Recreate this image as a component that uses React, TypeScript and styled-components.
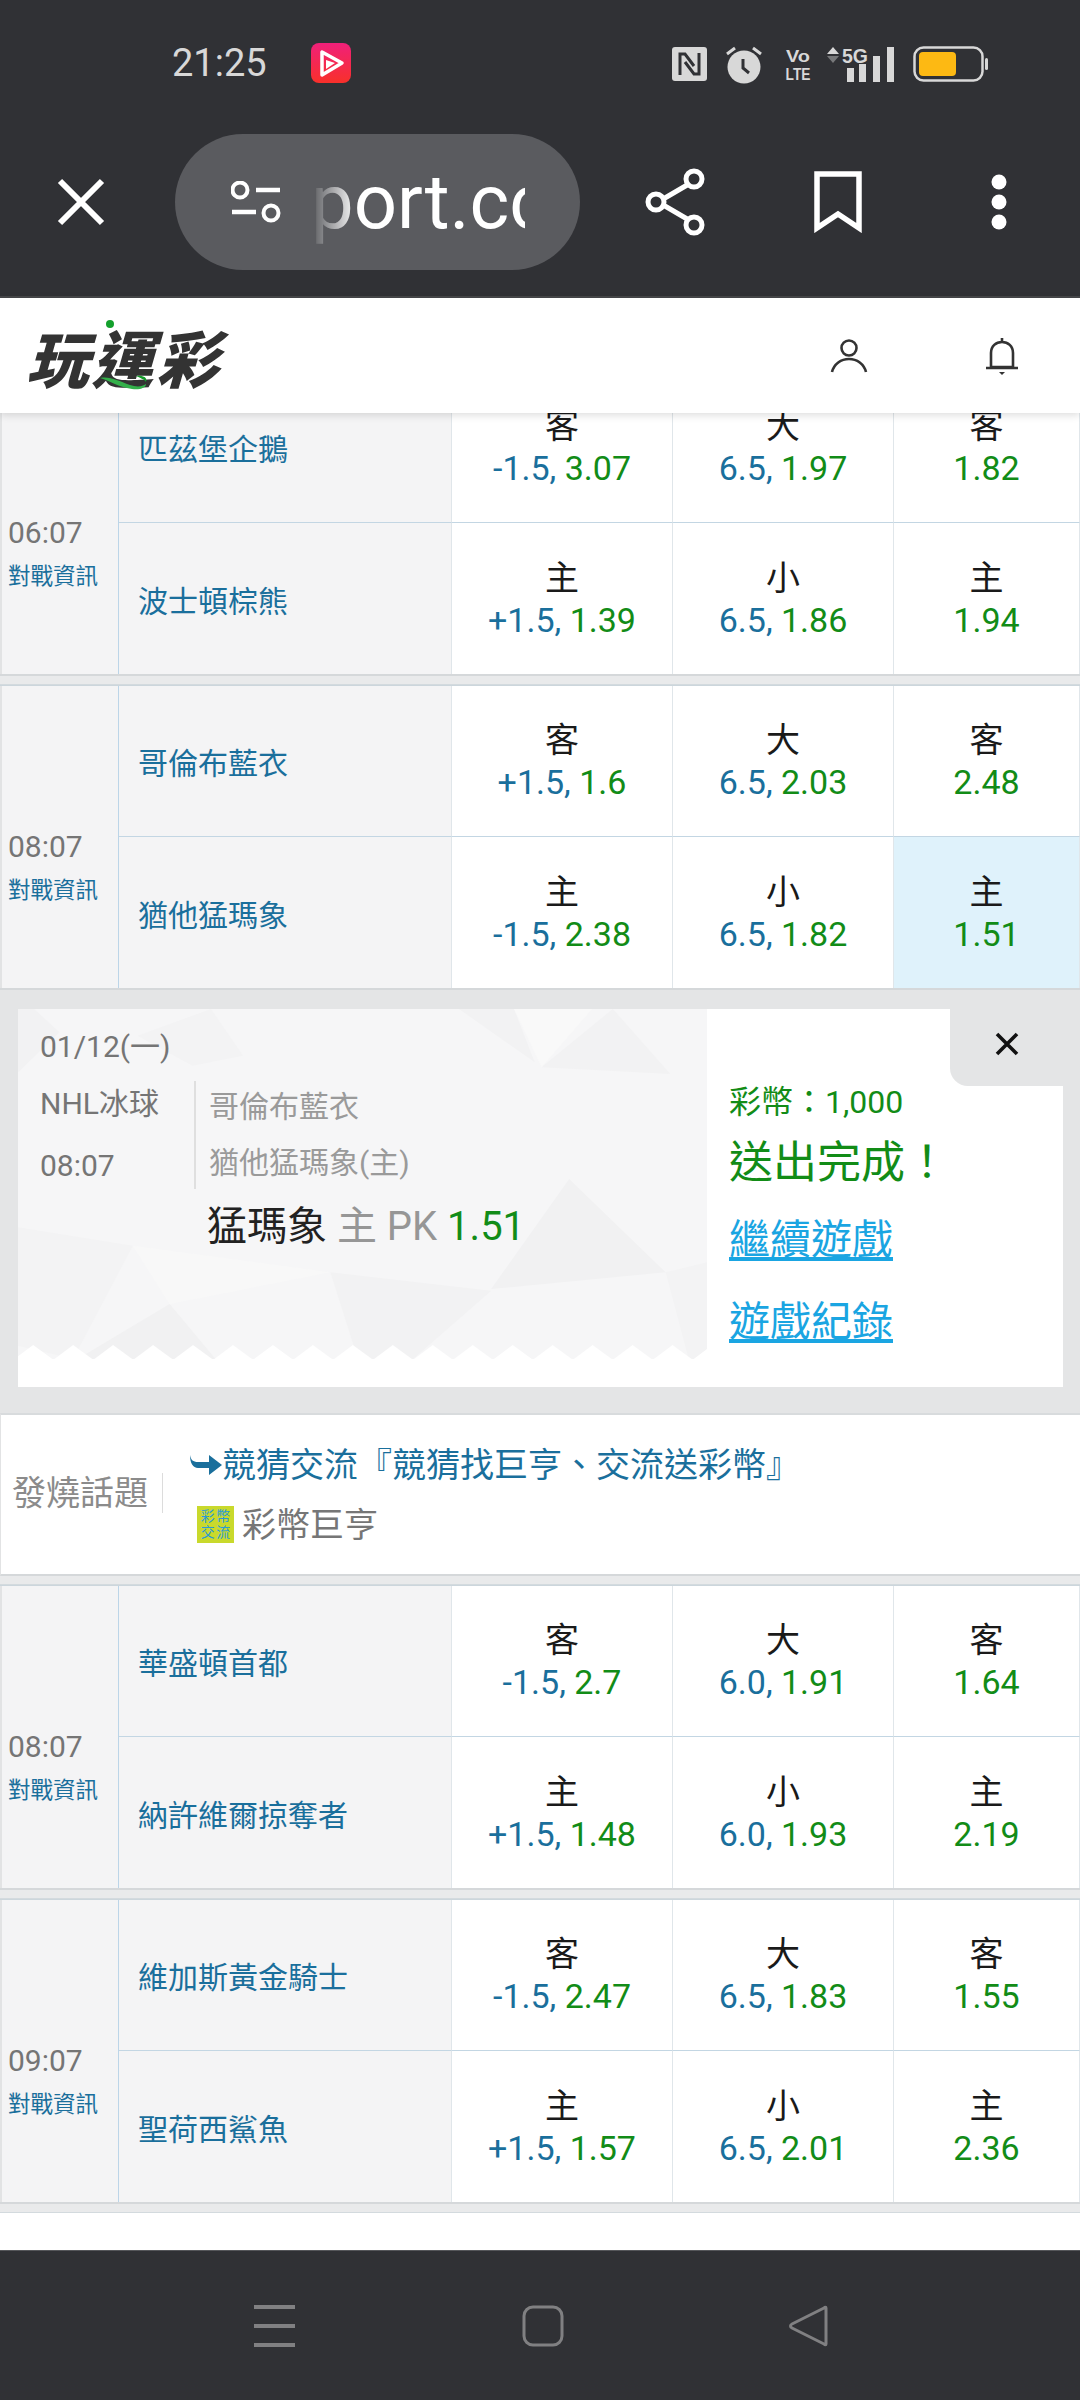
import * as React from 'react'
import styled, { createGlobalStyle } from 'styled-components'

const dark = '#303135'
const blue = '#1a6f9c'
const green = '#128c17'
const cjk = '"Roboto", "Noto Sans CJK TC", sans-serif'

const GlobalStyle = createGlobalStyle`
  html, body {
    margin: 0;
    padding: 0;
    background: #ffffff;
  }
  * {
    box-sizing: border-box;
  }
`

const Page = styled.div`
  width: 1080px;
  height: 2400px;
  display: flex;
  flex-direction: column;
  overflow: hidden;
  font-family: ${cjk};
`

const TopBar = styled.div`
  height: 298px;
  flex: none;
  background: ${dark};
  border-bottom: 2px solid #46474a;
`

const StatusBar = styled.div`
  height: 134px;
  display: flex;
  align-items: center;
  padding: 8px 91px 0 172px;
`

const Clock = styled.span`
  font-size: 38px;
  color: #d8d8d8;
  width: 98px;
  margin-top: -16px;
`

const AppIcon = styled.svg`
  margin: -16px 0 0 41px;
`

const StatusIcons = styled.div`
  margin-left: auto;
  display: flex;
  align-items: center;
  margin-top: -14px;
`

const StatusIcon = styled.svg<{ $gap: number }>`
  display: block;
  margin-left: ${(p) => p.$gap}px;
`

const Toolbar = styled.div`
  height: 136px;
  display: flex;
  align-items: center;
`

const ToolIcon = styled.svg<{ $gap: number }>`
  flex: none;
  margin-left: ${(p) => p.$gap}px;
`

const UrlPill = styled.div`
  flex: none;
  margin-left: 70px;
  width: 405px;
  height: 136px;
  border-radius: 68px;
  background: #5a5b5f;
  display: flex;
  align-items: center;
  padding-left: 56px;
`

const UrlText = styled.div`
  width: 214px;
  margin-left: 30px;
  height: 96px;
  overflow: hidden;
  font-size: 76px;
  line-height: 96px;
  color: #ffffff;
  text-align: right;
  white-space: nowrap;
  -webkit-mask-image: linear-gradient(90deg, transparent 0, #000 46px);
  mask-image: linear-gradient(90deg, transparent 0, #000 46px);
`

const SiteHeader = styled.header`
  height: 115px;
  flex: none;
  background: #ffffff;
  position: relative;
  z-index: 2;
  display: flex;
  align-items: center;
  padding: 0 61px 0 28px;
  box-shadow: 0 2px 8px rgba(0, 0, 0, 0.14);
`

const Logo = styled.div`
  position: relative;
  width: 196px;
  height: 80px;
`

const LogoText = styled.div`
  font-family: "Noto Sans CJK TC", sans-serif;
  font-weight: 900;
  font-size: 62px;
  line-height: 80px;
  letter-spacing: 3px;
  color: #333333;
  white-space: nowrap;
  transform: skewX(-16deg);
  transform-origin: 50% 50%;
  margin-left: 6px;
`

const LogoMark = styled.svg`
  position: absolute;
  left: 0;
  top: 0;
`

const HeaderIcons = styled.div`
  margin-left: auto;
  display: flex;
  align-items: center;
  gap: 117px;
`

const Content = styled.main`
  flex: 1;
  min-height: 0;
  overflow: hidden;
  background: #ffffff;
`

const Scroller = styled.div`
  margin-top: -42px;
`

const MatchGroup = styled.section`
  display: grid;
  grid-template-columns: 119px 333px 221px 221px 186px;
  grid-template-rows: 151px 151px;
  border-top: 1px solid #ccd6dc;
  border-bottom: 2px solid #d5d8da;
`

const Gap = styled.div`
  height: 9px;
  background: #e9eaeb;
  border-bottom: 1px solid #d3dade;
`

const TimeCell = styled.div`
  grid-row: 1 / span 2;
  background: #f4f4f5;
  border-left: 2px solid #e2e3e4;
  border-right: 1px solid #bcd5e8;
  padding: 58px 0 0 6px;
  display: flex;
  flex-direction: column;
  justify-content: center;
`

const Time = styled.div`
  font-size: 30px;
  line-height: 40px;
  color: #757575;
`

const InfoLink = styled.div`
  font-size: 22.5px;
  line-height: 30px;
  margin-top: 8px;
  color: ${blue};
  white-space: nowrap;
`

const TeamCell = styled.div<{ $last?: boolean }>`
  background: #f4f4f5;
  display: flex;
  align-items: center;
  padding-left: 19px;
  font-size: 30px;
  color: ${blue};
  border-right: 1px solid #e0e6ea;
  border-bottom: ${(p) => (p.$last ? 'none' : '1px solid #c3d6e3')};
`

const OddsCell = styled.div<{ $last?: boolean; $picked?: boolean }>`
  background: ${(p) => (p.$picked ? '#dff2fb' : '#ffffff')};
  display: flex;
  flex-direction: column;
  align-items: center;
  justify-content: center;
  border-right: 1px solid #e0e6ea;
  border-bottom: ${(p) => (p.$last ? 'none' : '1px solid #c3d6e3')};
`

const Side = styled.div`
  font-size: 34px;
  line-height: 42px;
  color: #1a1a1a;
`

const Odds = styled.div`
  font-size: 34px;
  line-height: 42px;
  color: ${green};
  white-space: nowrap;
`

const Line = styled.span`
  color: ${blue};
`

const Panel = styled.div`
  height: 423px;
  background: #e4e5e6;
  padding: 19px 17px 26px 18px;
`

const Ticket = styled.div`
  position: relative;
  height: 378px;
  background: #ffffff;
  display: flex;
`

const TicketLeft = styled.div`
  position: relative;
  width: 689px;
  height: 352px;
  flex: none;
  padding: 15px 0 0 22px;
`

const Pattern = styled.svg`
  position: absolute;
  left: 0;
  top: 0;
`

const DateText = styled.div`
  position: relative;
  font-size: 30px;
  line-height: 46px;
  color: #757575;
`

const MatchInfo = styled.div`
  position: relative;
  display: flex;
  margin-top: 11px;
`

const LeagueColumn = styled.div`
  width: 154px;
  height: 108px;
  display: flex;
  flex-direction: column;
  justify-content: space-between;
  font-size: 30px;
  line-height: 46px;
  color: #757575;
`

const TeamsColumn = styled.div`
  border-left: 2px solid #dfdfdf;
  padding: 0 0 0 13px;
  height: 108px;
  display: flex;
  flex-direction: column;
  justify-content: space-between;
  font-size: 30px;
  line-height: 52px;
  color: #9a9a9a;
`

const BetLine = styled.div`
  position: relative;
  margin: 10px 0 0 167px;
  font-size: 40px;
  line-height: 56px;
  color: #222222;
  white-space: nowrap;
`

const BetMuted = styled.span`
  color: #969696;
`

const BetOdds = styled.span`
  color: ${green};
`

const TicketRight = styled.div`
  padding: 70px 0 0 22px;
`

const Coins = styled.div`
  font-size: 32px;
  line-height: 46px;
  color: ${green};
`

const Done = styled.div`
  font-size: 44px;
  line-height: 60px;
  margin-top: 8px;
  color: ${green};
  white-space: nowrap;
`

const TicketLink = styled.a<{ $gap: number }>`
  display: block;
  font-size: 41px;
  line-height: 56px;
  margin-top: ${(p) => p.$gap}px;
  color: #1aa5e2;
  text-decoration: underline;
`

const CloseTab = styled.div`
  position: absolute;
  right: 0;
  top: 0;
  width: 113px;
  height: 77px;
  background: #e4e5e6;
  border-bottom-left-radius: 18px;
  display: flex;
  align-items: center;
  justify-content: center;
  padding-bottom: 8px;
`

const Forum = styled.div`
  height: 163px;
  display: flex;
  align-items: center;
  background: #ffffff;
  border-top: 2px solid #d8dbdd;
  border-left: 1px solid #e2e3e4;
  border-bottom: 2px solid #d5d8da;
`

const ForumLabel = styled.div`
  width: 162px;
  flex: none;
  padding-left: 11px;
  font-size: 34px;
  line-height: 40px;
  color: #8b8b8b;
  border-right: 1px solid #dcdcdc;
  margin-top: -4px;
  white-space: nowrap;
`

const ForumBody = styled.div`
  padding-left: 26px;
  display: flex;
  flex-direction: column;
  gap: 14px;
`

const Topic = styled.div`
  display: flex;
  align-items: center;
  font-size: 34px;
  line-height: 46px;
  color: ${blue};
  white-space: nowrap;
`

const Author = styled.div`
  display: flex;
  align-items: center;
  padding-left: 8px;
  font-size: 34px;
  line-height: 46px;
  color: #767676;
`

const Badge = styled.div`
  width: 37px;
  height: 37px;
  margin-right: 8px;
  padding: 3px;
  background: #c9d92c;
  display: grid;
  grid-template-columns: 1fr 1fr;
  font-size: 14px;
  line-height: 15px;
  text-align: center;
  color: #2a9ad6;
  overflow: hidden;
`

const BottomNav = styled.nav`
  height: 150px;
  flex: none;
  background: ${dark};
  border-top: 1px solid #55565a;
  display: flex;
  align-items: flex-start;
  padding: 54px 0 0 254px;
`

const NavIcon = styled.svg<{ $gap?: number }>`
  flex: none;
  margin-left: ${(p) => p.$gap || 0}px;
`

interface IRow {
  team: string
  spread: string
  spreadOdds: string
  total: string
  totalOdds: string
  money: string
  picked?: boolean
}

interface IMatch {
  time: string
  rows: [IRow, IRow]
}

const firstMatches: IMatch[] = [
  {
    time: '06:07',
    rows: [
      { team: '匹茲堡企鵝', spread: '-1.5', spreadOdds: '3.07', total: '6.5', totalOdds: '1.97', money: '1.82' },
      { team: '波士頓棕熊', spread: '+1.5', spreadOdds: '1.39', total: '6.5', totalOdds: '1.86', money: '1.94' },
    ],
  },
  {
    time: '08:07',
    rows: [
      { team: '哥倫布藍衣', spread: '+1.5', spreadOdds: '1.6', total: '6.5', totalOdds: '2.03', money: '2.48' },
      { team: '猶他猛瑪象', spread: '-1.5', spreadOdds: '2.38', total: '6.5', totalOdds: '1.82', money: '1.51', picked: true },
    ],
  },
]

const lastMatches: IMatch[] = [
  {
    time: '08:07',
    rows: [
      { team: '華盛頓首都', spread: '-1.5', spreadOdds: '2.7', total: '6.0', totalOdds: '1.91', money: '1.64' },
      { team: '納許維爾掠奪者', spread: '+1.5', spreadOdds: '1.48', total: '6.0', totalOdds: '1.93', money: '2.19' },
    ],
  },
  {
    time: '09:07',
    rows: [
      { team: '維加斯黃金騎士', spread: '-1.5', spreadOdds: '2.47', total: '6.5', totalOdds: '1.83', money: '1.55' },
      { team: '聖荷西鯊魚', spread: '+1.5', spreadOdds: '1.57', total: '6.5', totalOdds: '2.01', money: '2.36' },
    ],
  },
]

const Match = ({ match }: { match: IMatch }) => (
  <MatchGroup>
    <TimeCell>
      <Time>{match.time}</Time>
      <InfoLink>對戰資訊</InfoLink>
    </TimeCell>
    {match.rows.map((row, i) => {
      const last = i === 1
      return (
        <React.Fragment key={row.team}>
          <TeamCell $last={last}>{row.team}</TeamCell>
          <OddsCell $last={last}>
            <Side>{last ? '主' : '客'}</Side>
            <Odds>
              <Line>{row.spread}, </Line>
              {row.spreadOdds}
            </Odds>
          </OddsCell>
          <OddsCell $last={last}>
            <Side>{last ? '小' : '大'}</Side>
            <Odds>
              <Line>{row.total}, </Line>
              {row.totalOdds}
            </Odds>
          </OddsCell>
          <OddsCell $last={last} $picked={row.picked}>
            <Side>{last ? '主' : '客'}</Side>
            <Odds>{row.money}</Odds>
          </OddsCell>
        </React.Fragment>
      )
    })}
  </MatchGroup>
)

// zoomed shards of the ticket background
const shards: [string, string][] = [
  ['1335,60 1460,255 1180,235', '#f2f2f3'],
  ['1000,60 1120,60 1165,220', '#f2f2f3'],
  ['1120,60 1290,60 1180,235', '#f9f9f9'],
  ['40,60 75,60 130,130 40,250', '#f2f2f3'],
  ['460,60 530,200 420,230 300,140', '#f3f3f4'],
  ['1240,570 1450,850 1070,900', '#f1f1f2'],
  ['370,945 470,1110 170,1110', '#f1f1f2'],
  ['40,715 290,770 160,1110 40,1070', '#f3f3f4'],
  ['720,850 1070,905 900,1110 780,1110', '#f2f2f3'],
  ['1450,850 1540,820 1540,1110 1500,1110', '#f3f3f4'],
  ['290,770 720,850 370,945', '#f8f8f8'],
]

const teeth = Array.from({ length: 18 }, (_, i) => {
  const x = 30 + i * 87
  return `${x},1112 ${x + 43},1068 ${x + 87},1112`
})

const TicketPattern = () => (
  <Pattern width="689" height="352" viewBox="40 60 1500 1056" preserveAspectRatio="none">
    <rect x="40" y="60" width="1500" height="1056" fill="#f6f6f7" />
    {shards.map(([points, fill]) => (
      <polygon key={points} points={points} fill={fill} />
    ))}
    {teeth.map((points) => (
      <polygon key={points} points={points} fill="#ffffff" />
    ))}
    <rect x="40" y="1110" width="1500" height="6" fill="#ffffff" />
  </Pattern>
)

const App = () => (
  <Page>
    <GlobalStyle />
    <TopBar>
      <StatusBar>
        <Clock>21:25</Clock>
        <AppIcon width="40" height="40" viewBox="0 0 40 40">
          <defs>
            <linearGradient id="appGrad" x1="0" y1="0" x2="0" y2="1">
              <stop offset="0" stopColor="#f0207a" />
              <stop offset="1" stopColor="#f8302a" />
            </linearGradient>
          </defs>
          <rect width="40" height="40" rx="8" fill="url(#appGrad)" />
          <path d="M11 9v23l20-12z" fill="none" stroke="#fff" strokeWidth="3.5" strokeLinejoin="round" />
          <path d="M15 17l9 3-9 6z" fill="#fff" />
        </AppIcon>
        <StatusIcons>
          <StatusIcon $gap={0} width="35" height="34" viewBox="0 0 35 34">
            <rect width="35" height="34" rx="3" fill="#d8d8d8" />
            <path d="M8 28V7h5l9 12M27 6v21h-5l-9-12" fill="none" stroke={dark} strokeWidth="3" />
          </StatusIcon>
          <StatusIcon $gap={19} width="36" height="39" viewBox="0 0 36 39">
            <circle cx="18" cy="22" r="16.5" fill="#d8d8d8" />
            <path d="M17 14v9l6 5" fill="none" stroke={dark} strokeWidth="3" />
            <path d="M1 9l8-6M35 9l-8-6" stroke="#d8d8d8" strokeWidth="3" />
          </StatusIcon>
          <StatusIcon $gap={23} width="26" height="34" viewBox="0 0 26 34">
            <text x="13" y="15" textAnchor="middle" fontFamily="Liberation Sans" fontWeight="700" fontSize="17" textLength="24" lengthAdjust="spacingAndGlyphs" fill="#d8d8d8">Vo</text>
            <text x="13" y="33" textAnchor="middle" fontFamily="Liberation Sans" fontWeight="700" fontSize="17" textLength="25" lengthAdjust="spacingAndGlyphs" fill="#d8d8d8">LTE</text>
          </StatusIcon>
          <StatusIcon $gap={15} width="69" height="36" viewBox="0 0 69 36">
            <path d="M1 8l6-7 6 7z" fill="#d8d8d8" />
            <path d="M1 10h12l-6 7z" fill="#77787a" />
            <text x="16" y="17" fontFamily="Liberation Sans" fontWeight="700" fontSize="20" textLength="26" lengthAdjust="spacingAndGlyphs" fill="#d8d8d8">5G</text>
            <rect x="21" y="22" width="7" height="14" fill="#d8d8d8" />
            <rect x="33" y="18" width="7" height="18" fill="#d8d8d8" />
            <rect x="47" y="10" width="7" height="26" fill="#d8d8d8" />
            <rect x="61" y="1" width="7" height="35" fill="#d8d8d8" />
          </StatusIcon>
          <StatusIcon $gap={18} width="76" height="36" viewBox="0 0 76 36">
            <rect x="1.5" y="1.5" width="68" height="33" rx="9" fill="none" stroke="#d8d8d8" strokeWidth="2.5" />
            <rect x="6" y="6" width="37" height="24" rx="4" fill="#fdb913" />
            <rect x="72" y="12" width="3" height="12" rx="1.5" fill="#d8d8d8" />
          </StatusIcon>
        </StatusIcons>
      </StatusBar>
      <Toolbar>
        <ToolIcon $gap={57} width="48" height="48" viewBox="0 0 48 48">
          <path d="M3 3l42 42M45 3L3 45" stroke="#fff" strokeWidth="6" />
        </ToolIcon>
        <UrlPill>
          <svg width="50" height="42" viewBox="0 0 50 42">
            <circle cx="9" cy="9" r="7.5" fill="none" stroke="#fff" strokeWidth="4" />
            <path d="M25 9h24M1 31h24" stroke="#fff" strokeWidth="4.5" />
            <circle cx="40" cy="32" r="7.5" fill="none" stroke="#fff" strokeWidth="4" />
          </svg>
          <UrlText>port.cc</UrlText>
        </UrlPill>
        <ToolIcon $gap={65} width="62" height="68" viewBox="0 0 62 68">
          <path d="M49 13L13 34l36 21" fill="none" stroke="#fff" strokeWidth="5" />
          <circle cx="49" cy="11" r="8" fill={dark} stroke="#fff" strokeWidth="5" />
          <circle cx="11" cy="34" r="8" fill={dark} stroke="#fff" strokeWidth="5" />
          <circle cx="49" cy="57" r="8" fill={dark} stroke="#fff" strokeWidth="5" />
        </ToolIcon>
        <ToolIcon $gap={107} width="48" height="62" viewBox="0 0 48 62">
          <path d="M3 3h42v54L24 43 3 57z" fill="none" stroke="#fff" strokeWidth="5.5" />
        </ToolIcon>
        <ToolIcon $gap={129} width="16" height="56" viewBox="0 0 16 56">
          <circle cx="8" cy="8" r="7.5" fill="#fff" />
          <circle cx="8" cy="28" r="7.5" fill="#fff" />
          <circle cx="8" cy="48" r="7.5" fill="#fff" />
        </ToolIcon>
      </Toolbar>
    </TopBar>

    <SiteHeader>
      <Logo>
        <LogoText>玩運彩</LogoText>
        <LogoMark width="196" height="80" viewBox="0 0 196 80">
          <circle cx="82" cy="8" r="4" fill="#14a02c" />
          <path d="M72 62c8 2 18 9 32 11 8 1 14-1 14-5-4 3-10 3-16 1-12-4-20-9-30-7z" fill="#33b04a" />
          <path d="M108 60c6-1 12 1 10 6-2-3-6-4-10-6z" fill="#149a2a" />
        </LogoMark>
      </Logo>
      <HeaderIcons>
        <svg width="38" height="34" viewBox="0 0 38 34">
          <circle cx="19" cy="9" r="7.5" fill="none" stroke="#333" strokeWidth="2.6" />
          <path d="M2 33c2-8 9-13 17-13s15 5 17 13" fill="none" stroke="#333" strokeWidth="2.6" />
        </svg>
        <svg width="34" height="38" viewBox="0 0 34 38">
          <path d="M17 1v4M6 30V16c0-7 5-11 11-11s11 4 11 11v14zM1 31h32" fill="none" stroke="#333" strokeWidth="2.6" />
          <path d="M14 35h6l-3 3z" fill="#333" />
        </svg>
      </HeaderIcons>
    </SiteHeader>

    <Content>
      <Scroller>
        {firstMatches.map((match, i) => (
          <React.Fragment key={match.time}>
            <Match match={match} />
            {i === 0 && <Gap />}
          </React.Fragment>
        ))}
        <Panel>
          <Ticket>
            <TicketLeft>
              <TicketPattern />
              <DateText>01/12(一)</DateText>
              <MatchInfo>
                <LeagueColumn>
                  <div>NHL冰球</div>
                  <div>08:07</div>
                </LeagueColumn>
                <TeamsColumn>
                  <div>哥倫布藍衣</div>
                  <div>猶他猛瑪象(主)</div>
                </TeamsColumn>
              </MatchInfo>
              <BetLine>
                猛瑪象 <BetMuted>主 PK</BetMuted> <BetOdds>1.51</BetOdds>
              </BetLine>
            </TicketLeft>
            <TicketRight>
              <Coins>彩幣：1,000</Coins>
              <Done>送出完成！</Done>
              <TicketLink $gap={19}>繼續遊戲</TicketLink>
              <TicketLink $gap={26}>遊戲紀錄</TicketLink>
            </TicketRight>
            <CloseTab>
              <svg width="24" height="24" viewBox="0 0 24 24">
                <path d="M2 2l20 20M22 2L2 22" stroke="#111" strokeWidth="3.6" />
              </svg>
            </CloseTab>
          </Ticket>
        </Panel>
        <Forum>
          <ForumLabel>發燒話題</ForumLabel>
          <ForumBody>
            <Topic>
              <svg width="33" height="26" viewBox="0 0 33 26">
                <path d="M1 3c1 5 3 7 8 7h11V3l13 10-13 10v-7H9C4 16 1 11 1 3z" fill={blue} />
              </svg>
              競猜交流『競猜找巨亨、交流送彩幣』
            </Topic>
            <Author>
              <Badge>
                <span>彩</span>
                <span>幣</span>
                <span>交</span>
                <span>流</span>
              </Badge>
              彩幣巨亨
            </Author>
          </ForumBody>
        </Forum>
        <Gap />
        {lastMatches.map((match) => (
          <React.Fragment key={match.time}>
            <Match match={match} />
            <Gap />
          </React.Fragment>
        ))}
      </Scroller>
    </Content>

    <BottomNav>
      <NavIcon width="41" height="42" viewBox="0 0 41 42">
        <path d="M0 2h41M0 21h41M0 40h41" stroke="#808082" strokeWidth="4" />
      </NavIcon>
      <NavIcon $gap={227} width="42" height="42" viewBox="0 0 42 42">
        <rect x="2" y="2" width="38" height="38" rx="9" fill="none" stroke="#808082" strokeWidth="3" />
      </NavIcon>
      <NavIcon $gap={224} width="42" height="42" viewBox="0 0 42 42">
        <path d="M38 3c0-1-1-1-2 0L4 19c-2 1-2 3 0 4l32 16c1 1 2 1 2 0z" fill="none" stroke="#808082" strokeWidth="3" strokeLinejoin="round" />
      </NavIcon>
    </BottomNav>
  </Page>
)

export default App
